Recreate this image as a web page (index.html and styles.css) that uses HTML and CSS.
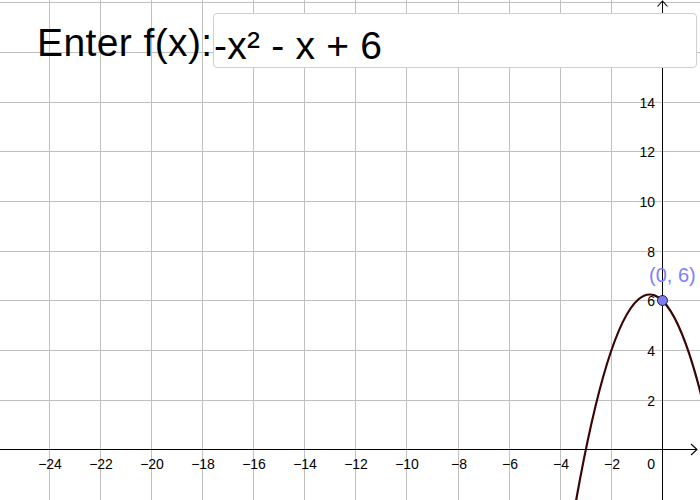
FILE: index.html
```html
<!DOCTYPE html>
<html lang="en">
<head>
<meta charset="utf-8">
<title>Enter f(x)</title>
<link rel="stylesheet" href="styles.css">
</head>
<body>
<div class="applet">
  <svg class="graph" width="700" height="500" viewBox="0 0 700 500" xmlns="http://www.w3.org/2000/svg">
    <g class="grid">
      <line x1="49.5" y1="0" x2="49.5" y2="500"/>
      <line x1="100.5" y1="0" x2="100.5" y2="500"/>
      <line x1="151.5" y1="0" x2="151.5" y2="500"/>
      <line x1="202.5" y1="0" x2="202.5" y2="500"/>
      <line x1="253.5" y1="0" x2="253.5" y2="500"/>
      <line x1="304.5" y1="0" x2="304.5" y2="500"/>
      <line x1="355.5" y1="0" x2="355.5" y2="500"/>
      <line x1="406.5" y1="0" x2="406.5" y2="500"/>
      <line x1="458.5" y1="0" x2="458.5" y2="500"/>
      <line x1="509.5" y1="0" x2="509.5" y2="500"/>
      <line x1="560.5" y1="0" x2="560.5" y2="500"/>
      <line x1="611.5" y1="0" x2="611.5" y2="500"/>
      <line x1="0" y1="2.5" x2="700" y2="2.5"/>
      <line x1="0" y1="52.5" x2="700" y2="52.5"/>
      <line x1="0" y1="102.5" x2="700" y2="102.5"/>
      <line x1="0" y1="151.5" x2="700" y2="151.5"/>
      <line x1="0" y1="201.5" x2="700" y2="201.5"/>
      <line x1="0" y1="251.5" x2="700" y2="251.5"/>
      <line x1="0" y1="300.5" x2="700" y2="300.5"/>
      <line x1="0" y1="350.5" x2="700" y2="350.5"/>
      <line x1="0" y1="400.5" x2="700" y2="400.5"/>
    </g>
    <g class="axes">
      <line x1="0" y1="449.5" x2="697" y2="449.5"/>
      <line x1="662.5" y1="1" x2="662.5" y2="500"/>
      <polyline points="691,444 697,449.5 691,455"/>
      <polyline points="657.5,6.5 662.5,1 667.5,6.5"/>
    </g>
    <g class="xlabels">
      <text x="50" y="468.5">−24</text>
      <text x="101" y="468.5">−22</text>
      <text x="152" y="468.5">−20</text>
      <text x="203" y="468.5">−18</text>
      <text x="254" y="468.5">−16</text>
      <text x="305" y="468.5">−14</text>
      <text x="356" y="468.5">−12</text>
      <text x="407" y="468.5">−10</text>
      <text x="459" y="468.5">−8</text>
      <text x="510" y="468.5">−6</text>
      <text x="561" y="468.5">−4</text>
      <text x="612" y="468.5">−2</text>
    </g>
    <g class="ylabels">
      <text x="655" y="468.5">0</text>
      <text x="655" y="405.5">2</text>
      <text x="655" y="355.5">4</text>
      <text x="655" y="305.5">6</text>
      <text x="655" y="256.5">8</text>
      <text x="655" y="206.5">10</text>
      <text x="655" y="156.5">12</text>
      <text x="655" y="107.5">14</text>
    </g>
    <path class="curve" d="M573.08 517.7 Q638.23 138.26 703.38 403.87"/>
    <circle class="point" cx="662.5" cy="300.5" r="5"/>
    <text class="point-label" x="649" y="282">(0, 6)</text>
  </svg>

  <div class="input-bar">
    <label class="caption" for="fx">Enter f(x):</label>
    <div class="field" id="fx">-x² - x + 6</div>
  </div>
</div>
</body>
</html>
```

FILE: styles.css
```css
html, body {
  margin: 0;
  padding: 0;
  background: #ffffff;
}

body {
  width: 700px;
  height: 500px;
  overflow: hidden;
  font-family: "Liberation Sans", Arial, sans-serif;
}

.applet {
  position: relative;
  width: 700px;
  height: 500px;
  overflow: hidden;
  background: #ffffff;
}

.graph {
  display: block;
}

.grid line {
  stroke: #c0c0c0;
  stroke-width: 1;
  shape-rendering: crispEdges;
}

.axes line {
  stroke: #000000;
  stroke-width: 1;
  shape-rendering: crispEdges;
}

.axes polyline {
  fill: none;
  stroke: #000000;
  stroke-width: 1.1;
}

.xlabels text,
.ylabels text {
  font-family: "Liberation Sans", Arial, sans-serif;
  font-size: 14px;
  fill: #000000;
}

.xlabels text {
  text-anchor: middle;
}

.ylabels text {
  text-anchor: end;
}

.curve {
  fill: none;
  stroke: #3a0505;
  stroke-width: 2.2;
}

.point {
  fill: #7b7bf2;
  stroke: #1f1f55;
  stroke-width: 1;
}

.point-label {
  font-family: "Liberation Sans", Arial, sans-serif;
  font-size: 20px;
  fill: #8080ff;
}

.input-bar {
  position: absolute;
  top: 13px;
  left: 37px;
  right: 3px;
  height: 55px;
  display: flex;
  align-items: flex-start;
  gap: 0.5px;
}

.caption {
  font-size: 39px;
  letter-spacing: 0.4px;
  line-height: 44px;
  padding-top: 7.5px;
  color: #000000;
  white-space: nowrap;
}

.field {
  flex: 1;
  box-sizing: border-box;
  height: 55px;
  background: #ffffff;
  border: 1px solid #cfcfcf;
  border-radius: 4px;
  font-size: 39px;
  letter-spacing: 0.2px;
  line-height: 44px;
  padding: 9.5px 0 0 0;
  color: #000000;
  white-space: nowrap;
}
```
